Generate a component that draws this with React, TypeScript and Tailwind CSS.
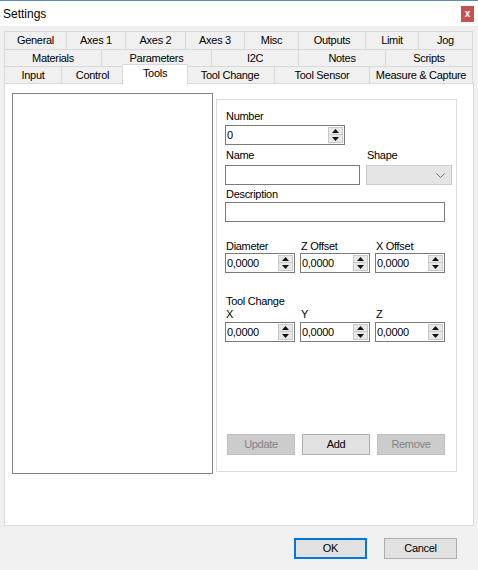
import React from 'react';

type Tab = { label: string; w: string; selected?: boolean };

const row1: Tab[] = [
  { label: 'General', w: 'w-[63px]' },
  { label: 'Axes 1', w: 'w-[59px]' },
  { label: 'Axes 2', w: 'w-[60px]' },
  { label: 'Axes 3', w: 'w-[59px]' },
  { label: 'Misc', w: 'w-[54px]' },
  { label: 'Outputs', w: 'w-[67px]' },
  { label: 'Limit', w: 'w-[53px]' },
  { label: 'Jog', w: 'w-[54px]' },
];

const row2: Tab[] = [
  { label: 'Materials', w: 'w-[98px]' },
  { label: 'Parameters', w: 'w-[110px]' },
  { label: 'I2C', w: 'w-[87px]' },
  { label: 'Notes', w: 'w-[87px]' },
  { label: 'Scripts', w: 'w-[87px]' },
];

const row3: Tab[] = [
  { label: 'Input', w: 'w-[58px]' },
  { label: 'Control', w: 'w-[62px]' },
  { label: 'Tools', w: 'w-[66px]', selected: true },
  { label: 'Tool Change', w: 'w-[89px]' },
  { label: 'Tool Sensor', w: 'w-[95px]' },
  { label: 'Measure & Capture', w: 'w-[103px]' },
];

const TabRow: React.FC<{ tabs: Tab[]; h: string }> = ({ tabs, h }) => (
  <div className={`flex ${h} items-start`}>
    {tabs.map((t, i) =>
      t.selected ? (
        <div
          key={t.label}
          className={`${t.w} relative z-10 -mt-[2px] -mx-[2px] h-[21px] bg-white border-t border-l border-r border-[#d9d9d9] flex justify-center pt-[1px] leading-[14px]`}
        >
          {t.label}
        </div>
      ) : (
        <div
          key={t.label}
          className={`${t.w} h-full bg-[#f0f0f0] border-t border-r border-[#d9d9d9] ${
            i === 0 ? 'border-l' : ''
          } flex items-center justify-center`}
        >
          {t.label}
        </div>
      )
    )}
  </div>
);

const Triangle: React.FC<{ up?: boolean }> = ({ up }) => (
  <svg width="7" height="4" viewBox="0 0 7 4">
    {up ? <polygon points="0,4 7,4 3.5,0" fill="#111" /> : <polygon points="0,0 7,0 3.5,4" fill="#111" />}
  </svg>
);

const SpinBox: React.FC<{ value: string; className: string }> = ({ value, className }) => (
  <div className={`${className} h-[20px] border border-[#7a7a7a] bg-white flex items-center justify-between pl-[1px] pr-[1px]`}>
    <span className="leading-none">{value}</span>
    <div className="w-[15px] h-[16px] flex flex-col">
      <div className="h-[8px] bg-[#e8e8e8] border border-[#c9c9c9] flex items-center justify-center">
        <Triangle up />
      </div>
      <div className="h-[8px] bg-[#e8e8e8] border border-t-0 border-[#c9c9c9] flex items-center justify-center">
        <Triangle />
      </div>
    </div>
  </div>
);

const Label: React.FC<{ children: React.ReactNode; className?: string }> = ({ children, className = '' }) => (
  <div className={`h-[13px] leading-[13px] pl-[1px] ${className}`}>{children}</div>
);

const App: React.FC = () => {
  return (
    <div className="w-[478px] h-[570px] bg-[#f0f0f0] flex flex-col border-t border-[#5a8bb8] overflow-hidden font-['Liberation_Sans',Arial,sans-serif] text-[11px] tracking-[-0.3px] text-black">
      {/* Title bar */}
      <div className="h-[25px] bg-white flex items-center justify-between pl-[3px] pr-[4px]">
        <span className="text-[12px] tracking-normal">Settings</span>
        <div className="w-[13px] h-[16px] bg-[#c75050] flex items-center justify-center text-white text-[10px] font-bold leading-none">
          x
        </div>
      </div>

      {/* Tabs */}
      <div className="mt-[5px] ml-[4px] flex flex-col">
        <TabRow tabs={row1} h="h-[18px]" />
        <TabRow tabs={row2} h="h-[17px]" />
        <TabRow tabs={row3} h="h-[17px]" />
      </div>

      {/* Tab page */}
      <div className="ml-[4px] w-[470px] h-[443px] border border-[#d9d9d9] bg-white flex items-start pl-[7px] pt-[9px]">
        <div className="w-[201px] h-[381px] border border-[#828282] bg-white" />

        <div className="ml-[3px] mt-[6px] w-[241px] h-[373px] border border-[#dcdcdc] flex flex-col pl-[8px]">
          <Label className="mt-[10px]">Number</Label>
          <SpinBox value="0" className="w-[120px] mt-[2px]" />

          <div className="flex mt-[4px]">
            <div className="flex flex-col">
              <Label>Name</Label>
              <div className="w-[135px] h-[20px] mt-[3px] border border-[#7a7a7a] bg-white" />
            </div>
            <div className="flex flex-col ml-[6px]">
              <Label>Shape</Label>
              <div className="w-[86px] h-[20px] mt-[3px] border border-[#cccccc] bg-[#e5e5e5] flex items-center justify-end pr-[6px]">
                <svg width="9" height="5" viewBox="0 0 9 5">
                  <polyline points="0.5,0.5 4.5,4.5 8.5,0.5" fill="none" stroke="#6d6d6d" strokeWidth="1" />
                </svg>
              </div>
            </div>
          </div>

          <Label className="mt-[3px]">Description</Label>
          <div className="w-[220px] h-[20px] mt-[1px] border border-[#7a7a7a] bg-white" />

          <div className="grid grid-cols-[70px_70px_70px] gap-x-[5px] mt-[18px]">
            <Label>Diameter</Label>
            <Label>Z Offset</Label>
            <Label>X Offset</Label>
            <SpinBox value="0,0000" className="w-[70px]" />
            <SpinBox value="0,0000" className="w-[70px]" />
            <SpinBox value="0,0000" className="w-[70px]" />
          </div>

          <Label className="mt-[22px]">Tool Change</Label>
          <div className="grid grid-cols-[70px_70px_70px] gap-x-[5px]">
            <Label>X</Label>
            <Label>Y</Label>
            <Label>Z</Label>
            <SpinBox value="0,0000" className="w-[70px] mt-[1px]" />
            <SpinBox value="0,0000" className="w-[70px] mt-[1px]" />
            <SpinBox value="0,0000" className="w-[70px] mt-[1px]" />
          </div>

          <div className="flex gap-[7px] mt-[92px] ml-[2px]">
            <div className="w-[68px] h-[21px] bg-[#cccccc] border border-[#bfbfbf] text-[#838383] flex items-center justify-center">
              Update
            </div>
            <div className="w-[68px] h-[21px] bg-[#e1e1e1] border border-[#adadad] flex items-center justify-center">
              Add
            </div>
            <div className="w-[68px] h-[21px] bg-[#cccccc] border border-[#bfbfbf] text-[#838383] flex items-center justify-center">
              Remove
            </div>
          </div>
        </div>
      </div>

      {/* Dialog buttons */}
      <div className="flex justify-end gap-[17px] mt-[12px] pr-[21px]">
        <div className="w-[73px] h-[21px] bg-[#e1e1e1] border-2 border-[#0078d7] flex items-center justify-center">
          OK
        </div>
        <div className="w-[73px] h-[21px] bg-[#e1e1e1] border border-[#adadad] flex items-center justify-center">
          Cancel
        </div>
      </div>
    </div>
  );
};

export default App;
